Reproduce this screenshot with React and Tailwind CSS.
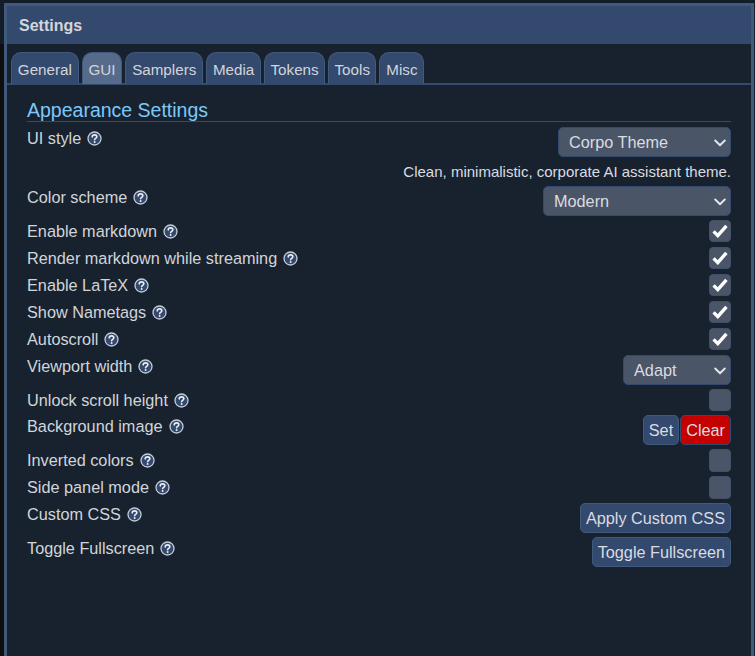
import React from "react";

const Help = () => (
  <svg width="15" height="15" viewBox="0 0 15 15" className="shrink-0 ml-[6px]" fill="none">
    <circle cx="7.5" cy="7.5" r="6.5" fill="#34496e" stroke="#c5ccd8" strokeWidth="1.3" />
    <path d="M5.2 5.9c.1-1.3 1.1-2 2.4-2 1.3 0 2.2.7 2.2 1.8 0 1.6-2.2 1.6-2.2 3" stroke="#eceef1" strokeWidth="1.6" strokeLinecap="round" />
    <circle cx="7.6" cy="11.1" r="1" fill="#eceef1" />
  </svg>
);

const Label = ({ children }) => (
  <div className="flex items-center h-[22px] text-[16.25px] text-[#d1d5da]">
    <span className="leading-[22px]">{children}</span>
    <Help />
  </div>
);

const Select = ({ value, width }) => (
  <div className="relative" style={{ width }}>
    <select
      defaultValue={value}
      className="block w-full h-[30px] appearance-none rounded-[5px] border border-[#34496e] bg-[#4a5568] pl-[10px] pt-[1px] text-[16.25px] text-[#d9dce0] outline-none"
    >
      <option>{value}</option>
    </select>
    <svg width="12" height="8" viewBox="0 0 12 8" className="absolute right-[5px] top-[12px] pointer-events-none" fill="none">
      <path d="M1.2 1.5 6 6.2l4.8-4.7" stroke="#e3e6ea" strokeWidth="1.9" strokeLinecap="round" strokeLinejoin="round" />
    </svg>
  </div>
);

const Check = ({ checked, tall }) => (
  <div
    className={
      "w-[22px] rounded-[4px] bg-[#4a5568] border border-[#415068] flex items-center justify-center " +
      (tall ? "h-[23px]" : "h-[22px]")
    }
  >
    {checked && (
      <svg width="16" height="14" viewBox="0 0 16 14" fill="none">
        <path d="M1.6 7.4 5.8 11.6 14.4 1.8" stroke="#fff" strokeWidth="3.4" />
      </svg>
    )}
  </div>
);

const Btn = ({ children, red }) => (
  <button
    className={
      "h-[30px] rounded-[5px] border px-[5px] pt-[1px] text-[16.25px] leading-none text-[#d9dce0] " +
      (red ? "bg-[#c50000] border-[#34496e]" : "bg-[#34496e] border-[#415a7c]")
    }
  >
    {children}
  </button>
);

const Row = ({ label, children, className = "" }) => (
  <div className={"flex justify-between items-start " + className}>
    <Label>{label}</Label>
    {children}
  </div>
);

const tabs = [
  ["General", "w-[67.7px]"],
  ["GUI", "w-[40.7px]"],
  ["Samplers", "w-[77.7px]"],
  ["Media", "w-[55px]"],
  ["Tokens", "w-[61px]"],
  ["Tools", "w-[48.4px]"],
  ["Misc", "w-[45px]"],
];

export default function App() {
  return (
    <div className="h-[656px] bg-[linear-gradient(#141c28_0_44px,#0e0e0e_44px)] border-r border-[#18222e] pl-[4px] pr-[0px] pt-[3px] overflow-hidden font-['Liberation_Sans',Arial,sans-serif]">
      <div className="h-[660px] border-[3px] border-b-0 border-[#415a7c] bg-[#18222e] flex flex-col">
        <div className="h-[38px] shrink-0 bg-[#34496e] pl-[12px] pt-[2px] flex items-center text-[16px] font-bold text-[#d3d6da]">
          Settings
        </div>
        <div className="h-[41px] shrink-0 pt-[8px] pl-[4px] flex gap-[3px] border-b-[2px] border-[#34496e]">
          {tabs.map(([t, w], i) => (
            <div
              key={t}
              className={
                w +
                " h-[32px] pt-[4px] rounded-t-[10px] border border-b-0 flex items-center justify-center text-[15.2px] text-[#d1d5da] " +
                (i === 1 ? "bg-[#566a8c] border-[#415a7c]" : "bg-[#34496e] border-[#415a7c]")
              }
            >
              {t}
            </div>
          ))}
        </div>
        <div className="pl-[20px] pr-[20px]">
          <div className="mt-[11px] h-[26px] border-b border-[#34496e] text-[19.5px] leading-[28px] text-[#7cc8f8]">
            Appearance Settings
          </div>
          <Row label="UI style" className="mt-[5px]">
            <Select value="Corpo Theme" width="173px" />
          </Row>
          <div className="mt-[6px] text-right text-[15px] leading-[18px] text-[#d9dce0]">
            Clean, minimalistic, corporate AI assistant theme.
          </div>
          <Row label="Color scheme" className="mt-[5px]">
            <Select value="Modern" width="188px" />
          </Row>
          <div className="mt-[4px] flex flex-col gap-[5px]">
            {["Enable markdown", "Render markdown while streaming", "Enable LaTeX", "Show Nametags", "Autoscroll"].map((l) => (
              <div key={l} className="flex justify-between items-center h-[22px]">
                <Label>{l}</Label>
                <Check checked />
              </div>
            ))}
          </div>
          <Row label="Viewport width" className="mt-[5px]">
            <Select value="Adapt" width="108px" />
          </Row>
          <div className="mt-[4px] flex justify-between items-center h-[22px]">
            <Label>Unlock scroll height</Label>
            <Check />
          </div>
          <Row label="Background image" className="mt-[4px]">
            <div className="flex gap-[1px]">
              <Btn>Set</Btn>
              <Btn red>Clear</Btn>
            </div>
          </Row>
          <div className="mt-[4px] flex justify-between items-start h-[23px]">
            <Label>Inverted colors</Label>
            <Check tall />
          </div>
          <div className="mt-[4px] flex justify-between items-start h-[23px]">
            <Label>Side panel mode</Label>
            <Check tall />
          </div>
          <Row label="Custom CSS" className="mt-[4px]">
            <Btn>Apply Custom CSS</Btn>
          </Row>
          <Row label="Toggle Fullscreen" className="mt-[4px]">
            <Btn>Toggle Fullscreen</Btn>
          </Row>
        </div>
      </div>
    </div>
  );
}
